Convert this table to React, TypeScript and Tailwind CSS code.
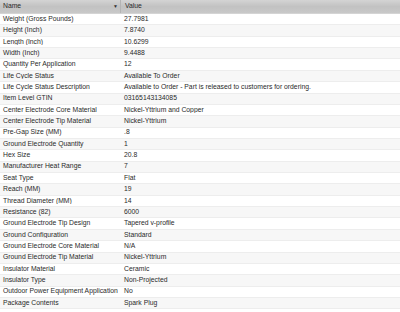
const rows: [string, string][] = [
  ["Weight (Gross Pounds)", "27.7981"],
  ["Height (Inch)", "7.8740"],
  ["Length (Inch)", "10.6299"],
  ["Width (Inch)", "9.4488"],
  ["Quantity Per Application", "12"],
  ["Life Cycle Status", "Available To Order"],
  ["Life Cycle Status Description", "Available to Order - Part is released to customers for ordering."],
  ["Item Level GTIN", "03165143134085"],
  ["Center Electrode Core Material", "Nickel-Yttrium and Copper"],
  ["Center Electrode Tip Material", "Nickel-Yttrium"],
  ["Pre-Gap Size (MM)", ".8"],
  ["Ground Electrode Quantity", "1"],
  ["Hex Size", "20.8"],
  ["Manufacturer Heat Range", "7"],
  ["Seat Type", "Flat"],
  ["Reach (MM)", "19"],
  ["Thread Diameter (MM)", "14"],
  ["Resistance (82)", "6000"],
  ["Ground Electrode Tip Design", "Tapered v-profile"],
  ["Ground Configuration", "Standard"],
  ["Ground Electrode Core Material", "N/A"],
  ["Ground Electrode Tip Material", "Nickel-Yttrium"],
  ["Insulator Material", "Ceramic"],
  ["Insulator Type", "Non-Projected"],
  ["Outdoor Power Equipment Application", "No"],
  ["Package Contents", "Spark Plug"],
];

export default function App() {
  return (
    <div className="w-[400px] h-[312px] overflow-hidden bg-white text-[#2a2a2a] text-[6.8px] leading-none font-['Liberation_Sans',Arial,sans-serif]">
      {/* Header */}
      <div className="flex h-[14px] bg-gradient-to-b from-[#d4d4d4] via-[#c2c2c2] to-[#c8c8c8] border-b border-[#d4d4d4]">
        <div className="w-[121px] flex items-center justify-between pl-[3px] pr-[2px] border-r border-[#b4b4b4]">
          <span>Name</span>
          <span className="text-[5px] text-[#333]">▼</span>
        </div>
        <div className="flex-1 flex items-center pl-[4px]">Value</div>
      </div>

      {/* Rows */}
      {rows.map(([name, value], i) => (
        <div
          key={name}
          className={`flex h-[11.37px] items-center border-b border-[#ededed] ${i % 2 === 0 ? "bg-white" : "bg-[#f7f7f7]"}`}
        >
          <div className="w-[121px] pl-[3px] whitespace-nowrap overflow-hidden">{name}</div>
          <div className="flex-1 pl-[3px] whitespace-nowrap overflow-hidden">{value}</div>
        </div>
      ))}
    </div>
  );
}
